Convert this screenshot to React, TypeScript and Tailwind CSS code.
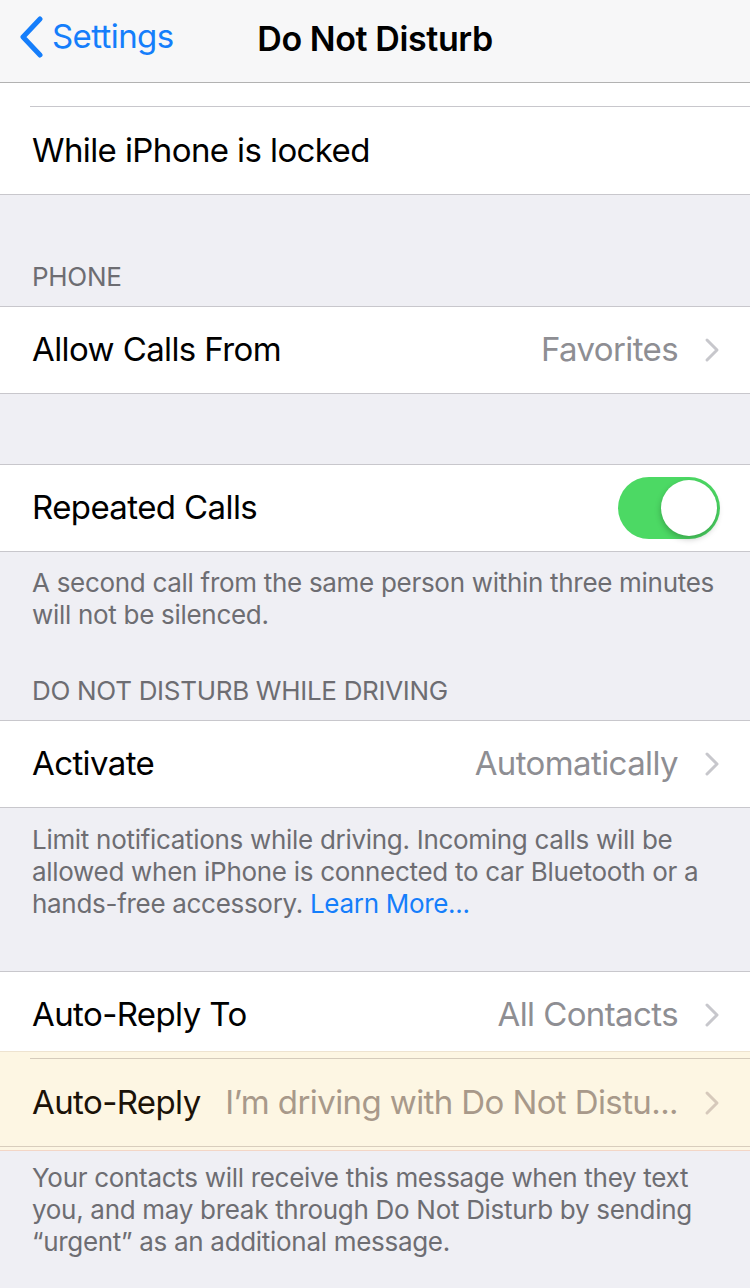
import React from "react";

const font = { fontFamily: "Inter, 'Noto Sans', sans-serif" };

function Chevron({ className = "stroke-[#c7c7cc]" }: { className?: string }) {
  return (
    <svg width="16" height="26" viewBox="0 0 16 26" className={className} fill="none">
      <path d="M3 3l10 10L3 23" strokeWidth="3" strokeLinecap="round" strokeLinejoin="round" />
    </svg>
  );
}

function Row({ label, value }: { label: string; value?: string }) {
  return (
    <div className="h-[86px] flex items-center pl-[32px] pr-[30px] bg-white">
      <span className="text-[33px] text-black tracking-[-0.6px]">{label}</span>
      <div className="flex-1" />
      {value && <span className="text-[33px] text-[#8e8e93] tracking-[-0.6px] mr-[26px]">{value}</span>}
      <Chevron />
    </div>
  );
}

function Header({ children, className }: { children: React.ReactNode; className: string }) {
  return (
    <div
      className={`pl-[32px] text-[26px] leading-[32px] text-[#6d6d72] tracking-[-0.3px] whitespace-nowrap ${className}`}
    >
      {children}
    </div>
  );
}

export default function App() {
  return (
    <div className="w-[750px] h-[1288px] bg-[#efeff4] overflow-hidden" style={font}>
      {/* Nav */}
      <div className="h-[83px] bg-[#f7f7f8] border-b border-[#b2b2b2] relative flex items-center pb-[8px]">
        <div className="flex items-center pl-[18px]">
          <svg width="26" height="42" viewBox="0 0 26 42" fill="none" className="stroke-[#157efb]">
            <path d="M22 3L5 21l17 18" strokeWidth="5" strokeLinecap="round" strokeLinejoin="round" />
          </svg>
          <span className="ml-[8px] text-[33px] tracking-[-0.6px] text-[#157efb]">Settings</span>
        </div>
        <div className="absolute left-0 right-0 top-0 h-[76px] flex items-center justify-center pointer-events-none">
          <span className="text-[34px] font-semibold text-black tracking-[-0.4px]">Do Not Disturb</span>
        </div>
      </div>

      {/* While locked */}
      <div className="bg-white border-b border-[#c8c7cc]">
        <div className="h-[23px]" />
        <div className="ml-[30px] border-t border-[#c8c7cc]" />
        <div className="h-[87px] flex items-center pl-[32px]">
          <span className="text-[33px] text-black tracking-[-0.6px]">While iPhone is locked</span>
        </div>
      </div>

      <Header className="pt-[66px] pb-[13px]">PHONE</Header>
      <div className="border-t border-b border-[#c8c7cc]">
        <Row label="Allow Calls From" value="Favorites" />
      </div>

      <div className="h-[70px]" />
      <div className="border-t border-b border-[#c8c7cc]">
        <div className="h-[86px] flex items-center pl-[32px] pr-[30px] bg-white">
          <span className="text-[33px] text-black tracking-[-0.6px]">Repeated Calls</span>
          <div className="flex-1" />
          <div className="w-[102px] h-[62px] rounded-full bg-[#4cd964] flex items-center justify-end pr-[3px]">
            <div className="w-[56px] h-[56px] rounded-full bg-white shadow-[0_3px_6px_rgba(0,0,0,0.25)]" />
          </div>
        </div>
      </div>

      <Header className="pt-[15px]">
        A second call from the same person within three minutes
        <br />
        will not be silenced.
      </Header>
      <Header className="pt-[44px] pb-[13px]">DO NOT DISTURB WHILE DRIVING</Header>
      <div className="border-t border-b border-[#c8c7cc]">
        <Row label="Activate" value="Automatically" />
      </div>

      <Header className="pt-[16px] pb-[51px]">
        Limit notifications while driving. Incoming calls will be
        <br />
        allowed when iPhone is connected to car Bluetooth or a
        <br />
        hands-free accessory. <span className="text-[#157efb]">Learn More...</span>
      </Header>

      <div className="border-t border-[#c8c7cc]">
        <div className="h-[79px] flex items-center pl-[32px] pr-[30px] bg-white pt-[7px]">
          <span className="text-[33px] text-black tracking-[-0.6px]">Auto-Reply To</span>
          <div className="flex-1" />
          <span className="text-[33px] text-[#8e8e93] tracking-[-0.6px] mr-[26px]">All Contacts</span>
          <Chevron />
        </div>
        <div className="bg-[#fdf6e3] border-t border-[#eee3d0]">
          <div className="h-[6px]" />
          <div className="ml-[30px] border-t border-[#d5cbbb]" />
          <div className="h-[87px] flex items-center pl-[32px] pr-[30px]">
            <span className="text-[33px] text-[#1b1208] tracking-[-0.6px] whitespace-nowrap">Auto-Reply</span>
            <div className="flex-1" />
            <span className="text-[33px] text-[#a8998a] tracking-[-0.6px] whitespace-nowrap mr-[26px]">
              I’m driving with Do Not Distu...
            </span>
            <Chevron className="stroke-[#d6c9bb]" />
          </div>
          <div className="border-t border-[#d8cdbd]" />
          <div className="h-[3px]" />
          <div className="border-t border-[#f3d6c6]" />
        </div>
      </div>

      <Header className="pt-[11px]">
        Your contacts will receive this message when they text
        <br />
        you, and may break through Do Not Disturb by sending
        <br />
        “urgent” as an additional message.
      </Header>
    </div>
  );
}
